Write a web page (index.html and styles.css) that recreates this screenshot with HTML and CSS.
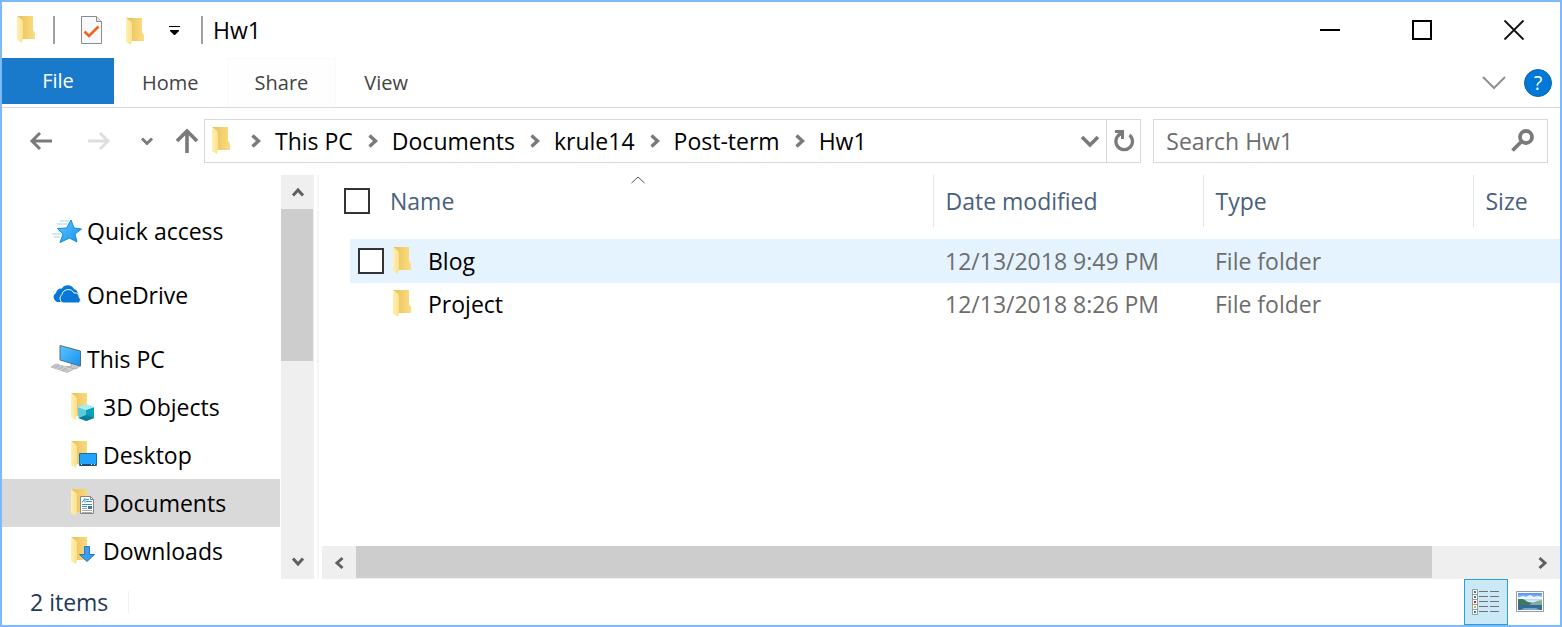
FILE: index.html
```html
<!DOCTYPE html>
<html lang="en">
<head>
<meta charset="utf-8">
<title>Hw1</title>
<link rel="stylesheet" href="styles.css">
</head>
<body>
<svg class="sprite" aria-hidden="true">
  <defs>
    <linearGradient id="body"><stop offset="0" stop-color="#e8bf57"/><stop offset=".4" stop-color="#efcb69"/><stop offset="1" stop-color="#fddd80"/></linearGradient>
    <linearGradient id="flap"><stop offset="0" stop-color="#fff0b4"/><stop offset="1" stop-color="#fde08c"/></linearGradient>
    <linearGradient id="blue" x1="0" y1="0" x2="1" y2="1"><stop offset="0" stop-color="#5cc4ff"/><stop offset="1" stop-color="#1593f0"/></linearGradient>
    <linearGradient id="sky" x1="0" y1="0" x2="0" y2="1"><stop offset="0" stop-color="#4f8ff5"/><stop offset=".5" stop-color="#d9ebff"/><stop offset="1" stop-color="#b9d8f2"/></linearGradient>
    <symbol id="folder" viewBox="0 0 20 28">
      <path d="M0 0H16V14L18 17V23H5V4Z" fill="url(#body)"/>
      <path d="M0 0L6 5V22L5 27L0 24Z" fill="url(#flap)"/>
    </symbol>
    <symbol id="crumb" viewBox="0 0 10 14">
      <path d="M1.500 1.500L7.500 7L1.500 12.500" fill="none" stroke="#7a7a7a" stroke-width="3.400"/>
    </symbol>
  </defs>
</svg>

<div class="window">
  <header class="titlebar">
    <svg class="title-folder" width="20" height="28"><use href="#folder"/></svg>
    <span class="divider"></span>
    <button class="quick" aria-label="Properties">
      <svg width="22" height="28" viewBox="0 0 22 28"><path d="M.500.500H15.500L20.500 5.500V27.500H.500Z" fill="#f8f9fa" stroke="#8b8b8b"/><path d="M15.500.500V5.500H20.500" fill="#e6e6e6" stroke="#8b8b8b"/><path d="M3.500 15.500L8 20L17.500 10.500" fill="none" stroke="#f2631c" stroke-width="2.600"/></svg>
    </button>
    <button class="quick" aria-label="New folder"><svg class="lowered" width="20" height="28"><use href="#folder"/></svg></button>
    <button class="quick customize" aria-label="Customize Quick Access Toolbar">
      <svg width="11" height="9" viewBox="0 0 11 9"><path d="M0 0H11V1H0ZM1 4H10V5L6 9H5L1 5Z" fill="#000"/></svg>
    </button>
    <span class="divider"></span>
    <h1 class="title">Hw1</h1>
    <div class="caption">
      <button aria-label="Minimize"><svg width="20" height="20"><path d="M0 10H20" stroke="#000" stroke-width="2"/></svg></button>
      <button aria-label="Maximize"><svg width="20" height="20"><path d="M1 1H19V19H1Z" fill="none" stroke="#000" stroke-width="2"/></svg></button>
      <button aria-label="Close"><svg width="20" height="20"><path d="M.500.500L19.500 19.500M19.500.500L.500 19.500" stroke="#111" stroke-width="1.800"/></svg></button>
    </div>
  </header>

  <nav class="ribbon" aria-label="Ribbon">
    <button class="tab file">File</button>
    <button class="tab">Home</button>
    <button class="tab faint">Share</button>
    <button class="tab">View</button>
    <div class="ribbon-end">
      <button aria-label="Expand the Ribbon"><svg width="24" height="14"><path d="M1 1L12 12L23 1" fill="none" stroke="#919191" stroke-width="2"/></svg></button>
      <button class="help" aria-label="Help">?</button>
    </div>
  </nav>

  <div class="address-row">
    <div class="history">
      <button aria-label="Back"><svg width="22" height="18"><path d="M22 9H2M10 1L2 9L10 17" fill="none" stroke="#7a7a7a" stroke-width="3"/></svg></button>
      <button aria-label="Forward"><svg width="22" height="18"><path d="M0 9H20M12 1L20 9L12 17" fill="none" stroke="#dedede" stroke-width="3"/></svg></button>
      <button aria-label="Recent locations"><svg width="12" height="9"><path d="M1 1.500L6 6.500L11 1.500" fill="none" stroke="#7a7a7a" stroke-width="3"/></svg></button>
      <button aria-label="Up"><svg width="22" height="26"><path d="M11 25V3M1 13L11 3L21 13" fill="none" stroke="#7a7a7a" stroke-width="3.600"/></svg></button>
    </div>
    <div class="address">
      <svg class="address-folder" width="20" height="28"><use href="#folder"/></svg>
      <svg class="crumb" width="10" height="14"><use href="#crumb"/></svg>
      <a href="#pc">This PC</a>
      <svg class="crumb" width="10" height="14"><use href="#crumb"/></svg>
      <a href="#documents">Documents</a>
      <svg class="crumb" width="10" height="14"><use href="#crumb"/></svg>
      <a href="#krule14">krule14</a>
      <svg class="crumb" width="10" height="14"><use href="#crumb"/></svg>
      <a href="#post-term">Post-term</a>
      <svg class="crumb" width="10" height="14"><use href="#crumb"/></svg>
      <a href="#hw1">Hw1</a>
      <button class="previous" aria-label="Previous locations"><svg width="18" height="12"><path d="M1 2L9 10L17 2" fill="none" stroke="#7a7a7a" stroke-width="3.600"/></svg></button>
      <button class="refresh" aria-label="Refresh"><svg width="20" height="22"><path d="M5.500 4.500A8.300 8.300 0 1 0 15.500 5" fill="none" stroke="#7a7a7a" stroke-width="3.200"/><path d="M1 0H10V9H7V5.500L5 7L3 4.500L4.500 3H1Z" fill="#7a7a7a"/></svg></button>
    </div>
    <div class="search">
      <input type="text" placeholder="Search Hw1" aria-label="Search Hw1">
      <button aria-label="Search"><svg width="24" height="24"><circle cx="15" cy="8" r="6" fill="none" stroke="#7a7a7a" stroke-width="3.800"/><path d="M11 12L1.500 21.500" stroke="#7a7a7a" stroke-width="3.800"/></svg></button>
    </div>
  </div>

  <main class="content">
    <nav class="tree" aria-label="Navigation pane">
      <a class="root" href="#quick"><svg width="32" height="28" viewBox="0 0 32 28">
        <path d="M9 4H18M6 7H16M1 17H10M3 20H9M7 14H11" stroke="#9cd3f5"/>
        <path d="M20 3L23 11L30.500 12L24 17L26 25L18.500 21L9 25.500L12 17L6.500 11.500L15.500 11Z" fill="url(#blue)" stroke="#168bd2"/></svg>Quick access</a>
      <a class="root" href="#onedrive"><svg width="32" height="28" viewBox="0 0 32 28">
        <path d="M6 21A5 5 0 0 1 5 12Q6 7 11 7.500C13 3 21 3 23 8Q27 9 27 14V21Z" fill="#0878d8"/>
        <path d="M12 22A5 5 0 0 1 11 13.500C12 7.500 21 7 23 12C27 11.500 28 14 28 16Q31 18 28.500 22Z" fill="#0878d8" stroke="#fff"/></svg>OneDrive</a>
      <a class="root" href="#pc"><svg width="32" height="28" viewBox="0 0 32 28">
        <path d="M20 17V21L15 22L25 24L29 21L24 19V17Z" fill="#c3cbd1" stroke="#929ba1" stroke-width=".600"/>
        <path d="M9 .500L29.500 6V21L9 15Z" fill="url(#blue)" stroke="#536f80"/>
        <path d="M5 19L23 24L16 27.500L0 22Z" fill="#d9dde0" stroke="#a4a9ad" stroke-width=".700"/>
        <path d="M3.500 20L20 25.500M2 21L18 26.500M8 20L3 23M12 21.500L7 24.500M16 23L11 26" stroke="#a6abb0" stroke-width=".700"/></svg>This PC</a>
      <a class="child" href="#objects"><svg width="28" height="28" viewBox="0 0 28 28"><use href="#folder" width="20" height="28"/>
        <path d="M6.500 14L15 17V28L7.500 25Z" fill="#5cc9dd"/><path d="M15 17L23 14V25L15 28Z" fill="#079fba"/><path d="M6.500 14L15 11L23 14L15 17Z" fill="#a7edf4"/><path d="M7.500 25L15 22L23 25L15 28Z" fill="#087f96"/></svg>3D Objects</a>
      <a class="child" href="#desktop"><svg width="28" height="28" viewBox="0 0 28 28"><use href="#folder" width="20" height="28"/>
        <path d="M8.500 12.500H25.500V24.500H8.500Z" fill="#21a4fb" stroke="#126eae"/><path d="M9 24H25" stroke="#164f78" stroke-width="2"/><path d="M10 23.500H11M20 23.500H21M23 23.500H24" stroke="#fff"/></svg>Desktop</a>
      <a class="child selected" href="#documents" aria-current="page"><svg width="28" height="28" viewBox="0 0 28 28"><use href="#folder" width="20" height="28"/>
        <path d="M9.500 7.500H19.500L22.500 10.500V24.500H9.500Z" fill="#fff" stroke="#858585"/><path d="M19.500 7.500V10.500H22.500" fill="none" stroke="#858585"/><path d="M11 13.500L14 9.500V13.500M15 10.500H18M15 12.500H21M11 15.500H21M11 17.500H16" fill="none" stroke="#3291ce"/><path d="M17 17H21V20H17Z" fill="#467ba0"/><path d="M11 19.500H16M11 21.500H21M11 23.500H21" stroke="#aaa"/></svg>Documents</a>
      <a class="child" href="#downloads"><svg width="28" height="28" viewBox="0 0 28 28"><use href="#folder" width="20" height="28"/>
        <path d="M13.500 9.500H18.500V17.500H23.500L16 24.500L8.500 17.500H13.500Z" fill="#3d9df0" stroke="#2278c4"/></svg>Downloads</a>
    </nav>
    <div class="scroll vertical">
      <button aria-label="Scroll up"><svg width="12" height="10"><path d="M1 8.500L6 3L11 8.500" fill="none" stroke="#606060" stroke-width="3"/></svg></button>
      <div class="track"><div class="thumb"></div></div>
      <button aria-label="Scroll down"><svg width="12" height="10"><path d="M1 1.500L6 7L11 1.500" fill="none" stroke="#606060" stroke-width="3"/></svg></button>
    </div>
    <div class="splitter"></div>
    <section class="files" aria-label="Files">
      <table>
        <thead>
          <tr>
            <th class="name-head"><div class="head-cell"><input type="checkbox" aria-label="Select all">Name<svg class="sort" width="14" height="8"><path d="M.500 7L7 1L13.500 7" fill="none" stroke="#555"/></svg></div></th>
            <th class="wide">Date modified</th>
            <th class="wide">Type</th>
            <th class="size">Size</th>
          </tr>
        </thead>
        <tbody>
          <tr class="hovered">
            <td class="name"><div class="name-cell"><input type="checkbox" aria-label="Select Blog"><svg width="20" height="28"><use href="#folder"/></svg>Blog</div></td>
            <td>12/13/2018 9:49 PM</td><td>File folder</td><td></td>
          </tr>
          <tr>
            <td class="name"><div class="name-cell unchecked"><svg width="20" height="28"><use href="#folder"/></svg>Project</div></td>
            <td>12/13/2018 8:26 PM</td><td>File folder</td><td></td>
          </tr>
        </tbody>
      </table>
      <div class="scroll horizontal">
        <button aria-label="Scroll left"><svg width="10" height="12"><path d="M8.500 1L3 6L8.500 11" fill="none" stroke="#606060" stroke-width="3"/></svg></button>
        <div class="track"><div class="thumb"></div></div>
        <button aria-label="Scroll right"><svg width="10" height="12"><path d="M1.500 1L7 6L1.500 11" fill="none" stroke="#606060" stroke-width="3"/></svg></button>
      </div>
    </section>
  </main>

  <footer class="status">
    <span class="count">2 items</span>
    <div class="views">
      <button class="active" aria-label="Details view"><svg width="28" height="26" viewBox="0 0 28 26">
        <path d="M.500.500H5.500V25.500H.500ZM.500 5.500H5.500M.500 10.500H5.500M.500 15.500H5.500M.500 20.500H5.500" fill="#fff" stroke="#9a9a9a"/>
        <path d="M2 3H4M2 23H4" stroke="#267f96" stroke-width="2"/><path d="M2 8H4" stroke="#3b76cc" stroke-width="2"/><path d="M2 13H4" stroke="#b42e20" stroke-width="2"/><path d="M2 18H4" stroke="#b7b36b" stroke-width="2"/>
        <path d="M7 2.500H16M18 2.500H27M7 7.500H16M18 7.500H27M7 12.500H16M18 12.500H27M7 17.500H16M18 17.500H27M7 22.500H16M18 22.500H27" stroke="#727272"/></svg></button>
      <button aria-label="Large thumbnails view"><svg width="28" height="22" viewBox="0 0 28 22">
        <path d="M.500.500H27.500V20.500H.500Z" fill="#fff" stroke="#999"/><path d="M2 2H26V19H2Z" fill="url(#sky)"/><path d="M4 6L7 5L10 6L14 4L18 6L22 5L26 6V8H2V7Z" fill="#f0f7ff"/><path d="M2 8L7 8L12 11L18 12L24 14V15H2Z" fill="#3d7b58"/><path d="M14 13L21 10L26 9V15H14Z" fill="#83ad98"/><path d="M2 14H26V19H2Z" fill="#346d9b"/><path d="M8 17H20L24 19H5Z" fill="#77a7c8"/></svg></button>
    </div>
  </footer>
</div>
</body>
</html>
```
FILE: styles.css
```css
* { box-sizing: border-box; }
body {
  margin: 0;
  color: #000;
  background: #fff;
  font: 23px/32px "Open Sans", "Noto Sans", sans-serif;
}
svg { display: block; flex: none; overflow: visible; }
a { color: inherit; text-decoration: none; }
button, input { font: inherit; color: inherit; }
button {
  display: flex;
  flex: none;
  align-items: center;
  justify-content: center;
  padding: 0;
  border: 0;
  background: transparent;
}
.sprite { position: absolute; width: 0; height: 0; }
.window {
  display: flex;
  flex-direction: column;
  min-height: 100vh;
  border: 2px solid #7ebafa;
}

.titlebar { display: flex; align-items: center; height: 56px; padding-left: 15px; }
.divider { width: 2px; height: 28px; background: #a0a0a0; }
.title-folder { margin-right: 16px; }
.quick { width: 44px; height: 44px; }
.divider + .quick { margin-left: 15px; }
.lowered { margin-top: 4px; }
.customize { width: 32px; margin-right: 11px; }
.title { margin: 0 auto 0 10px; font-size: 23px; font-weight: 400; }
.caption { display: flex; }
.caption button { width: 92px; height: 54px; }

.ribbon {
  display: flex;
  height: 50px;
  border-bottom: 1px solid #d9d9d9;
  color: #444;
  font-size: 20px;
}
.tab { height: 49px; padding: 0 27px; border: 1px solid transparent; }
.tab.faint { border-color: #f9f9f9; border-bottom: 0; background: #fefefe; }
.tab.file { width: 112px; height: 46px; background: #1979ca; color: #fff; }
.ribbon-end { display: flex; align-items: center; gap: 18px; margin-left: auto; padding-right: 8px; }
.help {
  width: 28px;
  height: 28px;
  border: 1px solid #0d65ad;
  border-radius: 50%;
  background: #0078d7;
  color: #fff;
}

.address-row { display: flex; gap: 12px; padding: 11px 12px 12px 28px; }
.history { display: flex; align-items: center; gap: 29px; margin-right: -6px; }
.history button { height: 44px; }
.history button:nth-child(2) { margin: 0 2px 0 7px; }
.history button:last-child { margin-left: -6px; }
.address {
  display: flex;
  flex: 1;
  align-items: center;
  height: 44px;
  border: 1px solid #d9d9d9;
  white-space: nowrap;
}
.address-folder { margin: 0 4px 0 7px; }
.crumb { margin: 0 14px 0 15px; }
.previous { width: 32px; height: 42px; margin-left: auto; }
.refresh { width: 34px; height: 42px; border-left: 1px solid #d9d9d9; }
.search { display: flex; width: 26%; border: 1px solid #d9d9d9; }
.search input { flex: 1; min-width: 0; padding: 0 12px; border: 0; background: transparent; }
.search input::placeholder { color: #6d6d6d; opacity: 1; }
.search button { width: 48px; }

.content { display: flex; flex: 1; }
.tree { width: 278px; padding-top: 32px; }
.tree a { display: flex; align-items: center; height: 48px; }
.tree .root { gap: 4px; margin-bottom: 16px; padding-left: 49px; }
.tree .root:nth-child(3) { margin-bottom: 0; }
.tree .child { gap: 4px; padding-left: 69px; }
.tree .selected { background: #d9d9d9; }

.scroll { display: flex; background: #efefef; }
.track { flex: 1; }
.thumb { background: #cdcdcd; }
.vertical { flex-direction: column; width: 33px; margin-left: 1px; }
.vertical button { width: 100%; height: 34px; }
.vertical .thumb { width: 32px; height: 152px; }
.horizontal { height: 33px; margin-top: auto; }
.horizontal button { width: 34px; height: 100%; }
.horizontal .thumb { width: 92%; height: 32px; }
.splitter { width: 2px; margin: 0 3px; background: #f5f5f5; }

.files { display: flex; flex: 1; flex-direction: column; min-width: 0; }
table { width: 100%; border-collapse: collapse; table-layout: fixed; }
th, td { padding: 0 12px; text-align: left; font-weight: 400; white-space: nowrap; }
thead { border-bottom: 12px solid #fff; }
th { height: 52px; border-left: 1px solid #e5e5e5; color: #4a607c; }
th.name-head { padding: 0; border-left: 0; }
.wide { width: 270px; }
.size { width: 87px; }
.head-cell {
  position: relative;
  display: flex;
  align-items: center;
  gap: 20px;
  height: 52px;
  margin-left: 22px;
}
.sort { position: absolute; top: 1px; left: 50%; margin-left: -7px; }
input[type="checkbox"] {
  flex: none;
  width: 26px;
  height: 26px;
  margin: 0;
  appearance: none;
  border: 2px solid #333;
  background: #fff;
}
td { height: 42px; color: #6d6d6d; }
td.name { padding: 0 0 0 28px; color: #000; }
.name-cell { display: flex; align-items: center; height: 42px; padding-left: 8px; }
.name-cell svg { margin: 0 15px 0 9px; }
.name-cell.unchecked { padding-left: 34px; }
.hovered td { height: 44px; }
.hovered td:not(.name), .hovered .name-cell { background: #e5f3ff; }
.hovered .name-cell { height: 44px; }

.status { display: flex; align-items: center; height: 46px; padding-left: 28px; color: #1e395b; }
.count { padding-right: 20px; border-right: 1px solid #f0f0f0; line-height: 22px; }
.views { display: flex; margin-left: auto; padding-right: 8px; }
.views button { width: 44px; height: 46px; }
.views .active { border: 1px solid #26a0da; background: #cbe8f6; }
```
